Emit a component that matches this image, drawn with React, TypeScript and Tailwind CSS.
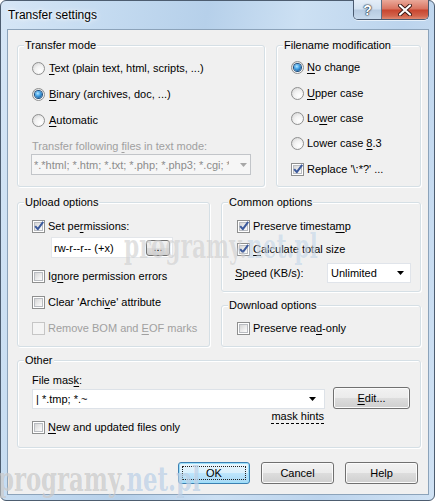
import React from "react";

function U({ children }: { children: React.ReactNode }) {
  return <span className="underline decoration-1 underline-offset-[2px]">{children}</span>;
}

function Radio({ checked }: { checked?: boolean }) {
  return (
    <span className="flex h-[13px] w-[13px] shrink-0 items-center justify-center rounded-full border border-[#8e8f8f] bg-[radial-gradient(circle_at_65%_70%,#ffffff_0%,#f2f2f2_45%,#cfcfcf_100%)]">
      {checked && (
        <span className="h-[7px] w-[7px] rounded-full bg-[radial-gradient(circle_at_40%_35%,#b8e8ff_0%,#45a4e8_40%,#12528f_85%)] shadow-[0_0_0_1px_#1e4d7c]" />
      )}
    </span>
  );
}

function Check({ checked, disabled }: { checked?: boolean; disabled?: boolean }) {
  return (
    <span
      className={
        disabled
          ? "relative block h-[13px] w-[13px] shrink-0 border border-[#c6c6c6] bg-[#f4f4f4]"
          : "relative block h-[13px] w-[13px] shrink-0 border border-[#8e8f8f] bg-white"
      }
    >
      {!disabled && (
        <span className="absolute inset-[1px] border border-[#b9bcc1] bg-[linear-gradient(135deg,#d6d6d6_0%,#f2f2f2_70%,#fbfbfb_100%)]" />
      )}
      {checked && (
        <svg className="absolute left-[0px] top-[-1px]" width="12" height="12" viewBox="0 0 12 12">
          <path d="M2.2 6.2 L4.8 9.2 L10.2 1.8" fill="none" stroke="#3c5a9c" strokeWidth="2" strokeLinejoin="round" />
        </svg>
      )}
    </span>
  );
}

function Arrow({ gray }: { gray?: boolean }) {
  return (
    <svg width="7" height="4" viewBox="0 0 7 4" className="shrink-0">
      <path d="M0 0H7L3.5 4Z" fill={gray ? "#a7a7a7" : "#000000"} />
    </svg>
  );
}

function Group({
  label,
  className,
  children,
}: {
  label: string;
  className: string;
  children: React.ReactNode;
}) {
  return (
    <div
      className={
        "relative rounded-[3px] border border-[#d5dfe5] shadow-[inset_1px_1px_0_#ffffff,1px_1px_0_#ffffff] " +
        className
      }
    >
      <span className="absolute left-[6px] top-[-8px] bg-[#f0f0f0] px-[1px] leading-[14px]">{label}</span>
      {children}
    </div>
  );
}

export default function App() {
  return (
    <div className="relative h-[501px] w-[436px] overflow-hidden bg-white font-['Liberation_Sans',Arial,sans-serif] text-[11px] text-black">
      <div className="flex h-[501px] w-[435px] flex-col rounded-[6px] border border-[#4d5d70] bg-[linear-gradient(100deg,#d6e6f6_0%,#c6dcf1_18%,#b6d0ea_40%,#cce0f3_58%,#bcd4ed_78%,#d0e2f4_100%)]">
        {/* title bar */}
        <div className="flex h-[28px] shrink-0 items-start">
          <div className="flex-1 pl-[7px] pt-[7px] font-['Liberation_Sans',Arial,sans-serif] text-[12px] leading-[15px] [text-shadow:0_0_6px_#ffffff,0_0_3px_#ffffff]">
            Transfer settings
          </div>
          <div className="mr-[5px] mt-[-1px] flex h-[20px] overflow-hidden rounded-b-[5px] border border-t-0 border-[#4a5a70] shadow-[0_1px_0_#e6f0fa]">
            <div className="flex h-[20px] w-[28px] items-center justify-center border-r border-[#5f6f84] bg-[linear-gradient(#e5eef8_0%,#d3e2f1_45%,#b7cbe1_50%,#c9dbee_100%)] text-[14px] font-bold leading-none text-white [text-shadow:0_0_1px_#1e2b3a,0_0_1px_#1e2b3a,0_0_2px_#1e2b3a]">
              ?
            </div>
            <div className="flex h-[20px] w-[46px] items-center justify-center bg-[linear-gradient(#eaa99a_0%,#d9735f_45%,#c8452f_50%,#d2644c_80%,#e49a82_100%)]">
              <svg width="14" height="12" viewBox="0 0 14 12">
                <path d="M2 1.5 L12 10.5 M12 1.5 L2 10.5" stroke="#3a1a16" strokeWidth="4" strokeLinecap="round" />
                <path d="M2 1.5 L12 10.5 M12 1.5 L2 10.5" stroke="#ffffff" strokeWidth="2.2" strokeLinecap="round" />
              </svg>
            </div>
          </div>
        </div>

        {/* client area */}
        <div className="ml-[6px] flex h-[466px] w-[422px] flex-col border border-[#8ca3ba] bg-[#f0f0f0] pl-[9px] pr-[7px] pt-[15px]">
          {/* row 1 */}
          <div className="flex h-[142px] gap-[11px]">
            <Group label="Transfer mode" className="w-[248px]">
              <div className="flex flex-col pl-[14px] pt-[15px]">
                <div className="flex h-[14px] items-center gap-[4px] leading-[14px]">
                  <Radio />
                  <span>
                    <U>T</U>ext (plain text, html, scripts, ...)
                  </span>
                </div>
                <div className="mt-[12px] flex h-[14px] items-center gap-[4px] leading-[14px]">
                  <Radio checked />
                  <span>
                    <U>B</U>inary (archives, doc, ...)
                  </span>
                </div>
                <div className="mt-[12px] flex h-[14px] items-center gap-[4px] leading-[14px]">
                  <Radio />
                  <span>
                    <U>A</U>utomatic
                  </span>
                </div>
                <div className="mt-[12px] h-[14px] leading-[14px] text-[#a0a0a0]">
                  Transfer following <U>f</U>iles in text mode:
                </div>
                <div className="ml-[-1px] mt-[1px] flex h-[21px] w-[220px] items-center border border-[#c2c5c9] bg-[#f6f6f6] pl-[2px] pr-[3px]">
                  <div className="flex-1 overflow-hidden whitespace-nowrap leading-[14px] text-[#8c8c8c]">
                    *.*html; *.htm; *.txt; *.php; *.php3; *.cgi; *.c; *.cpp; *.h; *.pas
                  </div>
                  <div className="ml-[11px]">
                    <Arrow gray />
                  </div>
                </div>
              </div>
            </Group>
            <Group label="Filename modification" className="w-[145px]">
              <div className="flex flex-col pl-[14px] pt-[14px]">
                <div className="flex h-[14px] items-center gap-[3px] leading-[14px]">
                  <Radio checked />
                  <span>
                    <U>N</U>o change
                  </span>
                </div>
                <div className="mt-[12px] flex h-[14px] items-center gap-[3px] leading-[14px]">
                  <Radio />
                  <span>
                    <U>U</U>pper case
                  </span>
                </div>
                <div className="mt-[11px] flex h-[14px] items-center gap-[3px] leading-[14px]">
                  <Radio />
                  <span>
                    Lo<U>w</U>er case
                  </span>
                </div>
                <div className="mt-[11px] flex h-[14px] items-center gap-[3px] leading-[14px]">
                  <Radio />
                  <span>
                    Lower case <U>8</U>.3
                  </span>
                </div>
                <div className="mt-[12px] flex h-[14px] items-center gap-[3px] leading-[14px]">
                  <Check checked />
                  <span>{"Replace '\\:*?' ..."}</span>
                </div>
              </div>
            </Group>
          </div>

          {/* row 2 */}
          <div className="mt-[15px] flex h-[145px] gap-[11px]">
            <Group label="Upload options" className="w-[193px]">
              <div className="flex flex-col pl-[14px] pt-[16px]">
                <div className="flex h-[14px] items-center gap-[3px] leading-[14px]">
                  <Check checked />
                  <span>
                    Set pe<U>r</U>missions:
                  </span>
                </div>
                <div className="ml-[19px] mt-[4px] flex h-[21px] w-[122px] items-center border border-[#e3e6ea] bg-white pl-[2px] pr-[2px]">
                  <span className="flex-1 whitespace-nowrap leading-[14px]">rw-r--r-- (+x)</span>
                  <span className="flex h-[16px] w-[24px] items-center justify-center rounded-[3px] border border-[#707070] bg-[linear-gradient(#f2f2f2_0%,#ebebeb_50%,#dddddd_50%,#cfcfcf_100%)] leading-none">
                    ...
                  </span>
                </div>
                <div className="mt-[11px] flex h-[14px] items-center gap-[3px] leading-[14px]">
                  <Check />
                  <span>
                    Ig<U>n</U>ore permission errors
                  </span>
                </div>
                <div className="mt-[12px] flex h-[14px] items-center gap-[3px] leading-[14px]">
                  <Check />
                  <span>
                    Clear 'Archi<U>v</U>e' attribute
                  </span>
                </div>
                <div className="mt-[12px] flex h-[14px] items-center gap-[3px] leading-[14px] text-[#a0a0a0]">
                  <Check disabled />
                  <span>
                    Remove BOM and <U>E</U>OF marks
                  </span>
                </div>
              </div>
            </Group>
            <div className="flex w-[200px] flex-col gap-[13px]">
              <Group label="Common options" className="h-[90px]">
                <div className="flex flex-col pl-[13px] pt-[16px]">
                  <div className="ml-[2px] flex h-[14px] items-center gap-[3px] leading-[14px]">
                    <Check checked />
                    <span>
                      Preserve timesta<U>m</U>p
                    </span>
                  </div>
                  <div className="ml-[2px] mt-[9px] flex h-[14px] items-center gap-[3px] leading-[14px]">
                    <Check checked />
                    <span>
                      <U>C</U>alculate total size
                    </span>
                  </div>
                  <div className="mt-[7px] flex h-[20px] items-center">
                    <span className="w-[92px] leading-[14px]">
                      <U>S</U>peed (KB/s):
                    </span>
                    <div className="flex h-[20px] w-[84px] items-center border border-[#e0e4ea] bg-white pl-[3px] pr-[6px]">
                      <span className="flex-1 leading-[14px]">Unlimited</span>
                      <Arrow />
                    </div>
                  </div>
                </div>
              </Group>
              <Group label="Download options" className="h-[42px]">
                <div className="flex flex-col pl-[15px] pt-[15px]">
                  <div className="flex h-[14px] items-center gap-[3px] leading-[14px]">
                    <Check />
                    <span>
                      Preserve rea<U>d</U>-only
                    </span>
                  </div>
                </div>
              </Group>
            </div>
          </div>

          {/* row 3 */}
          <Group label="Other" className="mt-[13px] h-[88px] w-[404px]">
            <div className="flex flex-col pl-[14px] pt-[12px]">
              <div className="h-[14px] leading-[14px]">
                File mas<U>k</U>:
              </div>
              <div className="flex items-end gap-[8px]">
                <div className="flex h-[20px] w-[293px] items-center border border-[#dde2e8] bg-white pl-[3px] pr-[8px]">
                  <span className="flex-1 whitespace-nowrap leading-[14px]">| *.tmp; *.~</span>
                  <Arrow />
                </div>
                <div className="relative flex h-[22px] w-[77px] items-center justify-center rounded-[3px] border border-[#707070] bg-[linear-gradient(#f2f2f2_0%,#ebebeb_50%,#dddddd_50%,#cfcfcf_100%)] leading-[14px] shadow-[inset_0_0_0_1px_#fbfbfb]">
                  <span>
                    <U>E</U>dit...
                  </span>
                </div>
              </div>
              <div className="h-[11px] w-[292px] text-right leading-[14px]">
                <span className="underline decoration-dashed decoration-1 underline-offset-[3px]">mask hints</span>
              </div>
              <div className="flex h-[14px] items-center gap-[3px] leading-[14px]">
                <Check />
                <span>
                  <U>N</U>ew and updated files only
                </span>
              </div>
            </div>
          </Group>

          {/* buttons */}
          <div className="mr-[3px] mt-[14px] flex h-[22px] justify-end gap-[11px]">
            <div className="relative flex h-[22px] w-[72px] items-center justify-center rounded-[3px] border border-[#3c7fb1] bg-[linear-gradient(#eaf6fd_0%,#d9f0fc_50%,#bee6fd_50%,#a7d9f5_100%)] leading-[14px] shadow-[inset_0_0_0_1px_#9ce0fb]">
              <span className="absolute inset-[3px] border border-dotted border-[#222]" />
              <span>OK</span>
            </div>
            <div className="flex h-[22px] w-[73px] items-center justify-center rounded-[3px] border border-[#707070] bg-[linear-gradient(#f2f2f2_0%,#ebebeb_50%,#dddddd_50%,#cfcfcf_100%)] leading-[14px] shadow-[inset_0_0_0_1px_#fbfbfb]">
              Cancel
            </div>
            <div className="flex h-[22px] w-[73px] items-center justify-center rounded-[3px] border border-[#707070] bg-[linear-gradient(#f2f2f2_0%,#ebebeb_50%,#dddddd_50%,#cfcfcf_100%)] leading-[14px] shadow-[inset_0_0_0_1px_#fbfbfb]">
              Help
            </div>
          </div>
        </div>
      </div>

      {/* watermarks */}
      <div className="pointer-events-none absolute left-[124px] top-[230px] origin-left scale-x-[0.66] whitespace-nowrap font-['DejaVu_Serif',serif] text-[33px] font-bold leading-[33px] [text-shadow:0_0_1px_rgba(255,255,255,0.5)]">
        <span className="text-[#8a8a8a]/25">programy.</span>
        <span className="text-[#6f9cc9]/25">net.pl</span>
      </div>
      <div className="pointer-events-none absolute left-[-2px] top-[462px] origin-left scale-x-[0.67] whitespace-nowrap font-['DejaVu_Serif',serif] text-[34px] font-bold leading-[34px] [text-shadow:0_0_1px_rgba(255,255,255,0.6)]">
        <span className="text-[#9a9a9a]/40">programy.</span>
        <span className="text-[#7fa6cf]/40">net.pl</span>
      </div>
    </div>
  );
}
